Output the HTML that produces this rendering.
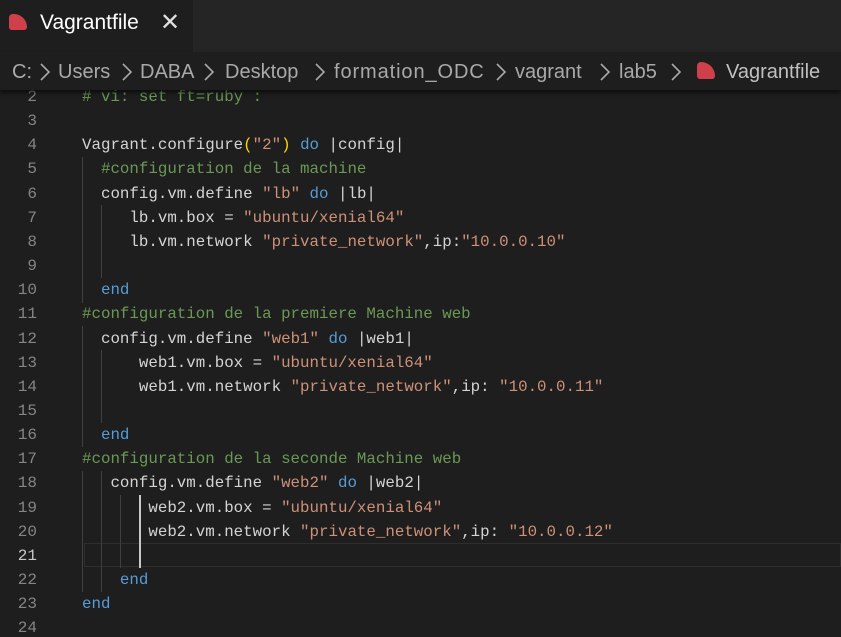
<!DOCTYPE html>
<html><head><meta charset="utf-8"><style>
html,body{margin:0;padding:0;width:841px;height:626px;overflow:hidden;background:#1e1e1e;}
#tabs{position:absolute;left:0;top:0;width:841px;height:52px;background:#252526;}
#tab{position:absolute;left:0;top:0;width:193px;height:52px;background:#1e1e1e;}
.icon{position:absolute;background:#d0404a;border-radius:4px 14px 3px 3px;}
#tabtxt{position:absolute;left:40px;top:11px;font:21px "Liberation Sans",sans-serif;color:#ffffff;}
#close{position:absolute;left:160px;top:8px;font:24px "DejaVu Sans",sans-serif;color:#e0e0e0;}
#bc{position:absolute;left:0;top:52px;width:841px;height:38px;background:#1e1e1e;box-shadow:0 3px 4px rgba(0,0,0,.55);z-index:5;font:20px "Liberation Sans",sans-serif;color:#a9a9a9;white-space:nowrap;}
#bc span{position:absolute;top:9px;}
#bc svg{position:absolute;top:11px;}
#code{position:absolute;left:0;top:0;font:15.8px "Liberation Mono",monospace;color:#d4d4d4;}
.ln{position:absolute;width:37px;text-align:right;color:#858585;font:16px "Liberation Mono",monospace;}
.l{position:absolute;left:82px;white-space:pre;}
.c{color:#6a9955}.s{color:#ce9178}.k{color:#569cd6}.y{color:#ffd700}
.g{position:absolute;width:1px;background:#404040;}
</style></head><body>
<div id="tabs"><div id="tab">
<div class="icon" style="left:9px;top:14px;width:18px;height:16px"></div>
<div id="tabtxt">Vagrantfile</div><div id="close">✕</div></div></div>
<div id="bc">
<span style="left:12px">C:</span>
<span style="left:58px">Users</span>
<span style="left:140px">DABA</span>
<span style="left:225px">Desktop</span>
<span style="left:334px;letter-spacing:0.9px">formation_ODC</span>
<span style="left:515px">vagrant</span>
<span style="left:619px">lab5</span>
<div class="icon" style="left:697px;top:10px;width:18px;height:17px"></div>
<span style="left:726px;color:#c0c0c0">Vagrantfile</span>
<svg style="left:0;top:0" width="841" height="38"><g fill="none" stroke="#a9a9a9" stroke-width="1.6">
<polyline points="41,12 49,20 41,28"/><polyline points="123,12 131,20 123,28"/><polyline points="205,12 213,20 205,28"/>
<polyline points="316,12 324,20 316,28"/><polyline points="497,12 505,20 497,28"/><polyline points="601,12 609,20 601,28"/>
<polyline points="672,12 680,20 672,28"/></g></svg>
</div>
<div id="code">
<div style="position:absolute;left:84px;top:543px;width:757px;height:24px;border:1px solid #2e2e2e;box-sizing:border-box"></div>
<div class="g" style="left:82px;top:157px;height:146px"></div>
<div class="g" style="left:101px;top:205px;height:73px"></div>
<div class="g" style="left:82px;top:326px;height:121px"></div>
<div class="g" style="left:101px;top:350px;height:73px"></div>
<div class="g" style="left:82px;top:471px;height:121px"></div>
<div class="g" style="left:101px;top:471px;height:121px"></div>
<div class="g" style="left:120px;top:495px;height:73px"></div>
<div class="g" style="left:139px;top:495px;height:73px;width:2px;background:#c8c8c8"></div>
<div id="lines"></div>
</div>
<script>
var L=[
[2,'<span class="c"># vi: set ft=ruby :</span>'],[3,''],
[4,'Vagrant.configure<span class="y">(</span><span class="s">"2"</span><span class="y">)</span> <span class="k">do</span> |config|'],
[5,'  <span class="c">#configuration de la machine</span>'],
[6,'  config.vm.define <span class="s">"lb"</span> <span class="k">do</span> |lb|'],
[7,'     lb.vm.box = <span class="s">"ubuntu/xenial64"</span>'],
[8,'     lb.vm.network <span class="s">"private_network"</span>,ip:<span class="s">"10.0.0.10"</span>'],
[9,''],[10,'  <span class="k">end</span>'],
[11,'<span class="c">#configuration de la premiere Machine web</span>'],
[12,'  config.vm.define <span class="s">"web1"</span> <span class="k">do</span> |web1|'],
[13,'      web1.vm.box = <span class="s">"ubuntu/xenial64"</span>'],
[14,'      web1.vm.network <span class="s">"private_network"</span>,ip: <span class="s">"10.0.0.11"</span>'],
[15,''],[16,'  <span class="k">end</span>'],
[17,'<span class="c">#configuration de la seconde Machine web</span>'],
[18,'   config.vm.define <span class="s">"web2"</span> <span class="k">do</span> |web2|'],
[19,'       web2.vm.box = <span class="s">"ubuntu/xenial64"</span>'],
[20,'       web2.vm.network <span class="s">"private_network"</span>,ip: <span class="s">"10.0.0.12"</span>'],
[21,''],[22,'    <span class="k">end</span>'],[23,'<span class="k">end</span>'],[24,'']];
var h='';L.forEach(function(a){var t=88+(a[0]-2)*24.15;
h+='<div class="ln" style="top:'+(t)+'px;'+(a[0]==21?'color:#c6c6c6':'')+'">'+a[0]+'</div><div class="l" style="top:'+t+'px">'+a[1]+'</div>';});
document.getElementById('lines').innerHTML=h;
</script>
</body></html>
